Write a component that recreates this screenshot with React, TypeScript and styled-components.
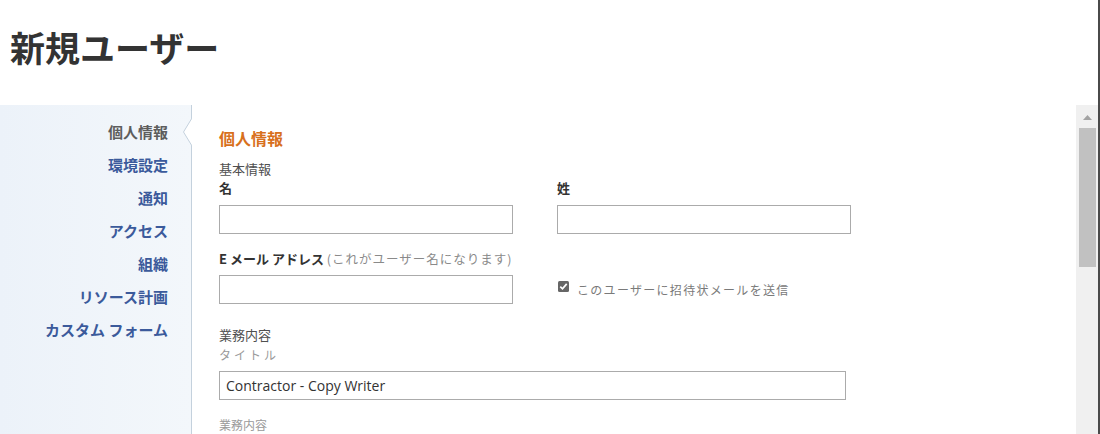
import React from 'react';
import styled, { createGlobalStyle } from 'styled-components';

const GlobalStyle = createGlobalStyle`
  html, body { margin: 0; padding: 0; background: #ffffff; }
  body {
    font-family: "Noto Sans CJK JP", "Noto Sans", "Liberation Sans", sans-serif;
    color: #333333;
  }
  * { box-sizing: border-box; }
`;

const Page = styled.div`
  width: 1100px;
  height: 434px;
  display: flex;
  overflow: hidden;
  background: #ffffff;
`;

const Main = styled.div`
  flex: 1;
  display: flex;
  flex-direction: column;
  min-width: 0;
`;

const Edge = styled.div`
  width: 2px;
  flex: 0 0 2px;
  background: #4a4a4a;
`;

const Header = styled.header`
  flex: 0 0 105px;
  padding: 22px 0 0 10px;
`;

const Title = styled.h1`
  margin: 0;
  font-size: 35px;
  font-weight: 700;
  line-height: 50px;
  color: #333333;
`;

const Body = styled.div`
  flex: 1;
  display: flex;
  min-height: 0;
`;

const Sidebar = styled.nav`
  width: 192px;
  flex: 0 0 192px;
  border-right: 1px solid #c4d1dd;
  background: linear-gradient(to right, #ecf2f9, #f3f7fb);
  padding-top: 10px;
  display: flex;
  flex-direction: column;
`;

const NavItem = styled.div<{ $active?: boolean }>`
  position: relative;
  text-align: right;
  padding-right: 23px;
  font-size: 15px;
  font-weight: 700;
  line-height: 33px;
  color: ${(p) => (p.$active ? '#5d5d5d' : '#3b5a9b')};
  cursor: pointer;
  white-space: nowrap;
`;

const Notch = styled.svg`
  position: absolute;
  right: -1px;
  top: 50%;
  transform: translateY(-50%);
  display: block;
`;

const Content = styled.section`
  flex: 1;
  min-width: 0;
  padding: 23px 0 0 27px;
  overflow: hidden;
`;

const SectionTitle = styled.h2`
  margin: 0;
  font-size: 16px;
  font-weight: 700;
  line-height: 20px;
  color: #d8701c;
`;

const GroupLabel = styled.div<{ $top: number }>`
  margin-top: ${(p) => p.$top}px;
  font-size: 13px;
  line-height: 18px;
  color: #4f4f4f;
`;

const SubLabel = styled.div<{ $top: number; $spaced?: boolean }>`
  margin-top: ${(p) => p.$top}px;
  font-size: 12px;
  line-height: 18px;
  color: #9a9a9a;
  letter-spacing: ${(p) => (p.$spaced ? '3px' : '0')};
`;

const Grid = styled.div`
  margin-top: 1px;
  display: grid;
  grid-template-columns: 294px 294px;
  column-gap: 44px;
  row-gap: 16px;
`;

const Field = styled.div`
  display: flex;
  flex-direction: column;
`;

const FieldLabel = styled.label<{ $gap: number }>`
  font-size: 13px;
  font-weight: 700;
  line-height: 18px;
  color: #333333;
  margin-bottom: ${(p) => p.$gap}px;
  white-space: nowrap;
`;

const Hint = styled.span`
  font-weight: 400;
  font-size: 12.5px;
  color: #8a8a8a;
  letter-spacing: 1px;
`;

const TextInput = styled.input<{ $width?: number }>`
  width: ${(p) => (p.$width ? `${p.$width}px` : '100%')};
  height: 29px;
  border: 1px solid #ababab;
  border-radius: 0;
  padding: 0 6px;
  font-family: "Open Sans", "Liberation Sans", sans-serif;
  font-size: 14px;
  color: #333333;
  background: #ffffff;
  outline: none;
`;

const CheckCell = styled.div`
  align-self: end;
  height: 29px;
  display: flex;
  align-items: center;
  gap: 8px;
  padding-left: 1px;
`;

const CheckBox = styled.svg`
  display: block;
  margin-bottom: 6px;
`;

const CheckText = styled.span`
  font-size: 12px;
  letter-spacing: 1.3px;
  color: #7a7a7a;
  white-space: nowrap;
`;

const Scrollbar = styled.div`
  width: 22px;
  flex: 0 0 22px;
  background: #f0f0f0;
  display: flex;
  flex-direction: column;
  align-items: center;
`;

const ArrowButton = styled.div`
  height: 23px;
  width: 100%;
  display: flex;
  align-items: center;
  justify-content: center;
  padding-top: 2px;
`;

const Thumb = styled.div`
  width: 17px;
  height: 139px;
  background: #c1c1c1;
`;

const navItems = ['個人情報', '環境設定', '通知', 'アクセス', '組織', 'リソース計画', 'カスタム フォーム'];

export default function App() {
  return (
    <>
      <GlobalStyle />
      <Page>
        <Main>
          <Header>
            <Title>新規ユーザー</Title>
          </Header>
          <Body>
            <Sidebar>
              {navItems.map((item, i) => (
                <NavItem key={item} $active={i === 0}>
                  {item}
                  {i === 0 && (
                    <Notch width="10" height="28" viewBox="0 0 10 28">
                      <polygon points="10,0 1.5,14 10,28" fill="#ffffff" />
                      <polyline points="10,0 1.5,14 10,28" fill="none" stroke="#c4d1dd" strokeWidth="1" />
                    </Notch>
                  )}
                </NavItem>
              ))}
            </Sidebar>
            <Content>
              <SectionTitle>個人情報</SectionTitle>
              <GroupLabel $top={12}>基本情報</GroupLabel>
              <Grid>
                <Field>
                  <FieldLabel $gap={8}>名</FieldLabel>
                  <TextInput />
                </Field>
                <Field>
                  <FieldLabel $gap={8}>姓</FieldLabel>
                  <TextInput />
                </Field>
                <Field>
                  <FieldLabel $gap={7}>
                    E メール アドレス <Hint>(これがユーザー名になります)</Hint>
                  </FieldLabel>
                  <TextInput />
                </Field>
                <CheckCell>
                  <CheckBox width="11" height="11" viewBox="0 0 11 11">
                    <rect x="0" y="0" width="11" height="11" rx="1.5" fill="#666666" />
                    <path d="M2.3 5.6 L4.5 7.8 L8.7 2.9" fill="none" stroke="#ffffff" strokeWidth="1.7" />
                  </CheckBox>
                  <CheckText>このユーザーに招待状メールを送信</CheckText>
                </CheckCell>
              </Grid>
              <GroupLabel $top={22}>業務内容</GroupLabel>
              <SubLabel $top={2} $spaced>タイトル</SubLabel>
              <TextInput $width={627} style={{ marginTop: 7 }} defaultValue="Contractor - Copy Writer" />
              <SubLabel $top={16}>業務内容</SubLabel>
            </Content>
            <Scrollbar>
              <ArrowButton>
                <svg width="9" height="5" viewBox="0 0 9 5">
                  <polygon points="4.5,0 9,5 0,5" fill="#a3a3a3" />
                </svg>
              </ArrowButton>
              <Thumb />
            </Scrollbar>
          </Body>
        </Main>
        <Edge />
      </Page>
    </>
  );
}
